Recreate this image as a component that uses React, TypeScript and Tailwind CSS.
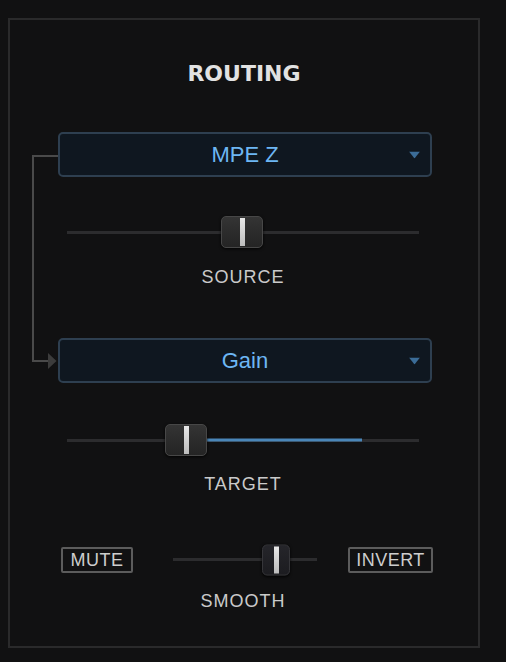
import React from "react";

const labelFont = { fontFamily: '"Liberation Sans", Arial, sans-serif' };

function Thumb({ w, h, left, dark }: { w: number; h: number; left: number; dark?: boolean }) {
  return (
    <div
      className={
        dark
          ? "absolute top-1/2 -translate-y-1/2 flex items-center justify-center rounded-[5px] border border-[#36363a] bg-gradient-to-b from-[#25252a] to-[#1c1c20] shadow-[0_1px_3px_rgba(0,0,0,0.9)]"
          : "absolute top-1/2 -translate-y-1/2 flex items-center justify-center rounded-[5px] border border-[#474747] bg-gradient-to-b from-[#343434] to-[#242424] shadow-[0_1px_3px_rgba(0,0,0,0.9)]"
      }
      style={{ width: w, height: h, left }}
    >
      <div className="h-[calc(100%-2px)] w-[5px] bg-gradient-to-b from-[#e8e8e8] to-[#bcbcbc]" />
    </div>
  );
}

function Slider({
  width,
  thumbLeft,
  thumbW,
  thumbH,
  fill,
  dark,
}: {
  width: number;
  thumbLeft: number;
  thumbW: number;
  thumbH: number;
  fill?: [number, number];
  dark?: boolean;
}) {
  return (
    <div className="relative flex items-center" style={{ width, height: thumbH }}>
      <div className="h-[3px] w-full bg-[#2c2c2e]" />
      {fill && (
        <div
          className="absolute top-1/2 h-[3px] -translate-y-1/2 bg-[#4a86b8]"
          style={{ left: fill[0], width: fill[1] - fill[0] }}
        />
      )}
      <Thumb w={thumbW} h={thumbH} left={thumbLeft} dark={dark} />
    </div>
  );
}

function Dropdown({ value }: { value: string }) {
  return (
    <div className="relative ml-[48px] flex h-[45px] w-[374px] items-center justify-center rounded-[5px] border-2 border-[#2e3f50] bg-[#0f1720]">
      <span className="text-[22px] leading-none text-[#6db6f4]" style={labelFont}>
        {value}
      </span>
      <svg className="absolute right-[10px] top-1/2 -translate-y-1/2" width="11" height="7" viewBox="0 0 11 7">
        <polygon points="0,0 11,0 5.5,7" fill="#3b6c97" />
      </svg>
    </div>
  );
}

function Label({ text }: { text: string }) {
  return (
    <div
      className="pr-[2px] text-center text-[18px] leading-[18px] tracking-[1px] text-[#cacaca]"
      style={labelFont}
    >
      {text}
    </div>
  );
}

function ToggleBox({ text, width }: { text: string; width: number }) {
  return (
    <div
      className="flex h-[26px] items-center justify-center rounded-[2px] border-2 border-[#5c5c5c] text-[18px] leading-none tracking-[0.5px] text-[#cdcdcd]"
      style={{ ...labelFont, width }}
    >
      {text}
    </div>
  );
}

export default function App() {
  return (
    <div className="min-h-[662px] w-[506px] bg-[#111112] pt-[18px] pl-[8px]">
      <div className="relative flex h-[630px] w-[472px] flex-col border-2 border-[#2a2a2b]">
        {/* routing connector from source to target */}
        <svg className="absolute left-0 top-0" width="60" height="360" viewBox="0 0 60 360">
          <path d="M48 136 H23 V341 H38" fill="none" stroke="#4a4a4a" strokeWidth="2" />
          <polygon points="38,333 46.5,341 38,349" fill="#3c3c3c" />
        </svg>

        <div
          className="mt-[43px] text-center text-[22px] font-bold leading-[22px] text-[#e2e2e2]"
          style={{ fontFamily: '"DejaVu Sans", Verdana, sans-serif' }}
        >
          ROUTING
        </div>

        <div className="mt-[47px]">
          <Dropdown value="MPE Z" />
        </div>

        <div className="ml-[57px] mt-[39px]">
          <Slider width={352} thumbLeft={154} thumbW={42} thumbH={32} />
        </div>
        <div className="mt-[20px]">
          <Label text="SOURCE" />
        </div>

        <div className="mt-[52px]">
          <Dropdown value="Gain" />
        </div>

        <div className="ml-[57px] mt-[41px]">
          <Slider width={352} thumbLeft={98} thumbW={42} thumbH={32} fill={[140, 295]} />
        </div>
        <div className="mt-[19px]">
          <Label text="TARGET" />
        </div>

        <div className="ml-[51px] mt-[51px] flex h-[31px] items-center">
          <ToggleBox text="MUTE" width={72} />
          <div className="ml-[40px]">
            <Slider width={144} thumbLeft={89} thumbW={28} thumbH={31} dark />
          </div>
          <div className="ml-[31px]">
            <ToggleBox text="INVERT" width={85} />
          </div>
        </div>
        <div className="mt-[17px]">
          <Label text="SMOOTH" />
        </div>
      </div>
    </div>
  );
}
